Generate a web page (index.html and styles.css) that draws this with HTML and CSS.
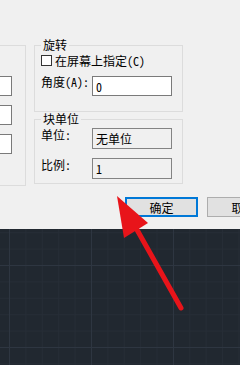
FILE: index.html
```html
<!DOCTYPE html>
<html lang="zh">
<head>
    <meta charset="UTF-8">
    <meta name="viewport" content="width=device-width, initial-scale=1.0">
    <title>插入块</title>
    <link rel="stylesheet" href="styles.css">
</head>
<body>

<div class="dialog">
    <div class="groups">
        <!-- Левая группа (обрезана краем окна) -->
        <div class="side-group">
            <input class="field" type="text" value="">
            <input class="field" type="text" value="">
            <input class="field" type="text" value="">
        </div>

        <div class="main-col">
            <fieldset class="group">
                <legend>旋转</legend>
                <label class="check-row"><input class="check" type="checkbox">在屏幕上指定(C)</label>
                <div class="row first">
                    <span class="label">角度(A):</span>
                    <input class="field wide" type="text" value="0">
                </div>
            </fieldset>

            <fieldset class="group block">
                <legend>块单位</legend>
                <div class="row">
                    <span class="label">单位:</span>
                    <input class="field wide ro" type="text" value="无单位" readonly>
                </div>
                <div class="row second">
                    <span class="label">比例:</span>
                    <input class="field wide ro" type="text" value="1" readonly>
                </div>
            </fieldset>
        </div>
    </div>

    <div class="buttons">
        <button class="btn default">确定</button>
        <button class="btn">取消</button>
    </div>
</div>

<div class="canvas"></div>

<!-- Стрелка поверх окна -->
<svg class="arrow" width="240" height="365" viewBox="0 0 240 365">
    <line x1="181" y1="308" x2="136" y2="228" stroke="#e8141a" stroke-width="5" stroke-linecap="round"/>
    <polygon points="117,196 148,223 124,238" fill="#e8141a"/>
</svg>

</body>
</html>
```

FILE: styles.css
```css
body {
    margin: 0;
    height: 365px;
    overflow: hidden;
    display: flex;
    flex-direction: column;
    position: relative;
    font-family: "Noto Sans Mono CJK SC", "Noto Sans CJK SC", "DejaVu Sans", sans-serif;
    font-size: 12px;
    color: #000;
    background-color: #f0f0f0;
}

/* Диалог */
.dialog {
    height: 229px;
    flex: none;
    padding-top: 38px;
    box-sizing: border-box;
    background-color: #f0f0f0;
}
.groups { display: flex; }

.side-group {
    margin-left: -35px;
    margin-top: 7px;
    width: 61px;
    height: 141px;
    box-sizing: border-box;
    border: 1px solid #dcdcdc;
    border-left: none;
    padding: 30px 13px 0 0;
    display: flex;
    flex-direction: column;
    align-items: flex-end;
    gap: 9px;
}
.side-group .field { width: 40px; }

.main-col { margin-left: 8px; width: 149px; }

.group {
    margin: 0;
    padding: 0 6px 15px;
    border: 1px solid #dcdcdc;
    min-width: 0;
}
.group legend {
    padding: 0 2px;
    line-height: 14px;
}
.group.block { padding-bottom: 4px; }

.check-row {
    display: flex;
    align-items: center;
    height: 17px;
    line-height: 14px;
    white-space: nowrap;
}
.check {
    appearance: none;
    margin: 0 3px 0 0;
    width: 11px;
    height: 11px;
    border: 1px solid #333;
    background: #fff;
}

.row { display: flex; align-items: flex-start; margin-top: 2px; }
.row.first { margin-top: 7px; }
.row.second { margin-top: 9px; }
.row .label { width: 51px; line-height: 14px; white-space: nowrap; }
.row.first .label { margin-top: -1px; }

.field {
    height: 20px;
    box-sizing: border-box;
    border: 1px solid #7a7a7a;
    background: #fff;
    padding: 0 3px;
    margin: 0;
    font: inherit;
    font-size: 12px;
}
.field.wide { width: 80px; }
.row .field.ro { height: 21px; }
.field.ro { background: #f0f0f0; border-color: #838383; }

/* Кнопки */
.buttons {
    display: flex;
    gap: 9px;
    margin-top: 11px;
    padding-left: 125px;
}
.btn {
    flex: none;
    width: 73px;
    height: 20px;
    padding: 0;
    font: inherit;
    font-size: 12px;
    background: #e1e1e1;
    border: 1px solid #adadad;
    color: #000;
}
.btn.default { border: 2px solid #0078d7; }

/* Поле чертежа */
.canvas {
    flex: 1;
    background-color: #212830;
    background-image:
        linear-gradient(to right, #2e3641 1px, transparent 1px),
        linear-gradient(to bottom, #2e3641 1px, transparent 1px),
        linear-gradient(to right, #262d36 1px, transparent 1px),
        linear-gradient(to bottom, #262d36 1px, transparent 1px);
    background-size: 82px 82px, 82px 82px, 16.4px 16.4px, 16.4px 16.4px;
    background-position: 9px 36px, 9px 36px, 9px 36px, 9px 36px;
}

.arrow { position: absolute; top: 0; left: 0; pointer-events: none; }
```
